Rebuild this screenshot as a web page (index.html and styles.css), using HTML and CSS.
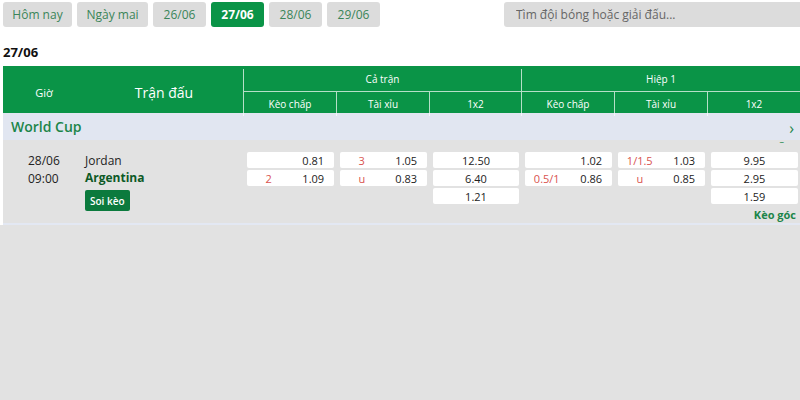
FILE: index.html
```html
<!DOCTYPE html>
<html lang="vi">
<head>
    <meta charset="UTF-8">
    <title>Kèo bóng đá</title>
    <link rel="stylesheet" href="styles.css">
</head>
<body>
    <div class="topbar">
        <div class="tabs">
            <button class="tab">Hôm nay</button>
            <button class="tab wide">Ngày mai</button>
            <button class="tab date">26/06</button>
            <button class="tab date active">27/06</button>
            <button class="tab date">28/06</button>
            <button class="tab date">29/06</button>
        </div>
        <input class="search" type="text" placeholder="Tìm đội bóng hoặc giải đấu...">
    </div>

    <h3 class="day">27/06</h3>

    <div class="table">
        <div class="thead">
            <div class="th time">Giờ</div>
            <div class="th match">Trận đấu</div>
            <div class="group">
                <div class="group-title">Cả trận</div>
                <div class="sub">
                    <div>Kèo chấp</div>
                    <div>Tài xỉu</div>
                    <div>1x2</div>
                </div>
            </div>
            <div class="group">
                <div class="group-title">Hiệp 1</div>
                <div class="sub">
                    <div>Kèo chấp</div>
                    <div>Tài xỉu</div>
                    <div>1x2</div>
                </div>
            </div>
        </div>

        <div class="league">
            <span>World Cup</span>
            <span class="chev">›</span>
        </div>

        <div class="match-row">
            <span class="dash">–</span>
            <div class="when">
                <div>28/06</div>
                <div>09:00</div>
            </div>
            <div class="teams">
                <div>Jordan</div>
                <div class="fav">Argentina</div>
                <button class="soi">Soi kèo</button>
            </div>

            <div class="odds">
                <div class="box"><span class="line"></span><span class="val">0.81</span></div>
                <div class="box"><span class="line">2</span><span class="val">1.09</span></div>
            </div>
            <div class="odds">
                <div class="box"><span class="line">3</span><span class="val">1.05</span></div>
                <div class="box"><span class="line">u</span><span class="val">0.83</span></div>
            </div>
            <div class="odds">
                <div class="box center">12.50</div>
                <div class="box center">6.40</div>
                <div class="box center">1.21</div>
            </div>

            <div class="odds">
                <div class="box"><span class="line"></span><span class="val">1.02</span></div>
                <div class="box"><span class="line">0.5/1</span><span class="val">0.86</span></div>
            </div>
            <div class="odds">
                <div class="box"><span class="line">1/1.5</span><span class="val">1.03</span></div>
                <div class="box"><span class="line">u</span><span class="val">0.85</span></div>
            </div>
            <div class="odds">
                <div class="box center">9.95</div>
                <div class="box center">2.95</div>
                <div class="box center">1.59</div>
            </div>

            <a class="corner" href="#">Kèo góc</a>
        </div>
    </div>
</body>
</html>
```

FILE: styles.css
```css
html { background: #e2e2e2; }
body { margin: 0; font-family: "Open Sans", "Noto Sans", Arial, sans-serif; font-size: 12px; color: #222; background: #fff; }

.topbar { display: flex; justify-content: space-between; align-items: center; padding: 2px 0 0 3px; }
.tabs { display: flex; gap: 5px; }
.tab { width: 69px; height: 25px; padding: 0; border: none; border-radius: 3px; background: #dcdcdc; color: #3a8558; font-family: inherit; font-size: 12px; cursor: pointer; }
.tab.wide { width: 71px; }
.tab.date { width: 53px; }
.tab.active { background: #0a9447; color: #fff; font-weight: bold; }
.search { width: 296px; height: 25px; box-sizing: border-box; border: none; border-radius: 3px 0 0 3px; background: #dcdcdc; padding: 0 12px; font-family: inherit; font-size: 12px; }
.search::placeholder { color: #666; }

.day { margin: 0; padding: 16px 0 0 3px; height: 22px; font-size: 13px; font-weight: bold; color: #111; }

.table { margin-left: 3px; }
.thead { display: grid; grid-template-columns: 82px 158px 278px 1fr; height: 47px; margin-top: 1px; background: #0a9447; color: #fff; }
.th { display: flex; align-items: center; justify-content: center; font-size: 11px; }
.th.match { font-size: 14px; }
.group { display: grid; grid-template-rows: 23px 24px; border-left: 1px solid rgba(255,255,255,0.7); margin: 3px 0 2px; }
.group-title { display: flex; align-items: center; justify-content: center; font-size: 10px; border-bottom: 1px solid rgba(255,255,255,0.7); margin-top: -3px; }
.sub { display: grid; grid-template-columns: 92px 93px 1fr; font-size: 10px; }
.sub div { display: flex; align-items: center; justify-content: center; border-left: 1px solid rgba(255,255,255,0.7); }
.sub div:first-child { border-left: none; }

.league { display: flex; justify-content: space-between; align-items: center; height: 27px; padding: 0 6px 0 8px; background: #e1e6f1; color: #1c8549; font-size: 14px; font-weight: 600; }
.chev { font-size: 16px; font-weight: normal; padding-top: 2px; }

.match-row { position: relative; display: grid; grid-template-columns: 82px 158px 93px 93px 92px 93px 93px 1fr; align-items: start; padding: 12px 0 0; height: 71px; background: #e2e2e2; border-bottom: 2px solid #e3e8f3; }
.when { padding: 0 0 0 25px; line-height: 18px; }
.teams { line-height: 17px; }
.fav { font-weight: bold; color: #0d5a26; }
.soi { margin-top: 4px; height: 21px; padding: 0 5px; border: none; border-radius: 2px; background: #0b7a3d; color: #fff; font-family: inherit; font-size: 10px; font-weight: 600; }

.odds { display: flex; flex-direction: column; gap: 2px; padding: 0 2px 0 4px; }
.box { display: flex; align-items: center; height: 16px; background: #fff; border-radius: 2px; font-size: 11px; }
.box .line { width: 50%; text-align: center; color: #d9534f; }
.box .val { flex: 1; text-align: center; padding-left: 2px; color: #222; }
.box.center { justify-content: center; }

.dash { position: absolute; right: 16px; top: -5px; color: #1c8549; font-size: 9px; }
.corner { position: absolute; right: 4px; bottom: 1px; color: #1c8549; font-weight: bold; font-size: 11px; text-decoration: none; }
```
